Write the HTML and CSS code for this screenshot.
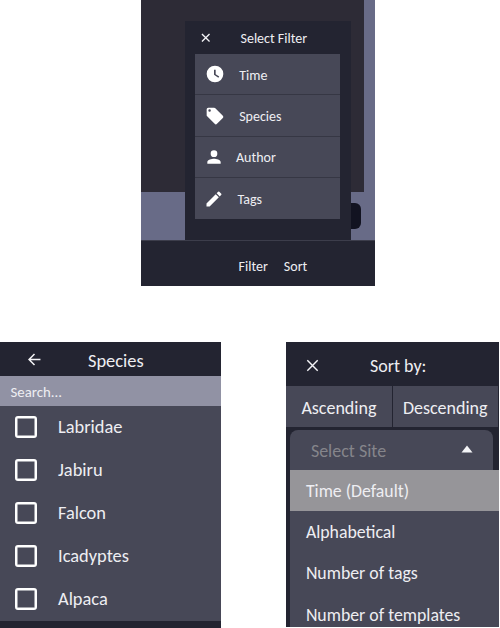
FILE: index.html
```html
<!DOCTYPE html>
<html lang="en">
<head>
<meta charset="utf-8">
<title>Filter and sort</title>
<link rel="stylesheet" href="styles.css">
</head>
<body>
<section class="filter-screen">
  <div class="backdrop">
    <span class="knob"></span>
    <div class="dialog">
      <header class="dialog-head">
        <svg class="close" viewBox="0 0 10 10"><path d="M1 1l8 8M9 1l-8 8"/></svg>
        <h2>Select Filter</h2>
      </header>
      <ul class="filters">
        <li><svg class="icon" viewBox="0 0 24 24"><path fill-rule="evenodd" d="M12 2a10 10 0 1 0 0 20 10 10 0 0 0 0-20zm4 14.400L10.800 13V7h2v5.200l4.300 2.800z"/></svg><span>Time</span></li>
        <li><svg class="icon" viewBox="0 0 24 24"><path fill-rule="evenodd" d="M21.400 11.600l-9-9A2 2 0 0 0 11 2H4a2 2 0 0 0-2 2v7c0 .6.2 1 .6 1.400l9 9a2 2 0 0 0 2.800 0l7-7a2 2 0 0 0 0-2.800zM5.500 7a1.500 1.500 0 1 1 0-3 1.500 1.500 0 0 1 0 3z"/></svg><span>Species</span></li>
        <li><svg class="icon person" viewBox="0 0 24 24"><path d="M12 12a4 4 0 1 0 0-8 4 4 0 0 0 0 8zm0 2c-2.700 0-8 1.300-8 4v2h16v-2c0-2.700-5.300-4-8-4z"/></svg><span class="author">Author</span></li>
        <li><svg class="icon pencil" viewBox="0 0 24 24"><path d="M3 17.250V21h3.750L17.810 9.940l-3.750-3.750zM20.710 7.040a1 1 0 0 0 0-1.410l-2.340-2.340a1 1 0 0 0-1.410 0l-1.830 1.830 3.750 3.750z"/></svg><span class="tags">Tags</span></li>
      </ul>
    </div>
  </div>
  <footer class="tabs"><span>Filter</span><span>Sort</span></footer>
</section>
<main class="panels">
  <section class="species">
    <header class="species-head">
      <svg class="back" viewBox="0 0 12 12"><path d="M11.500 6H1M6 1L1 6l5 5"/></svg>
      <h2>Species</h2>
    </header>
    <div class="search">Search...</div>
    <ul class="checks">
      <li><i class="box"></i><span>Labridae</span></li>
      <li><i class="box"></i><span>Jabiru</span></li>
      <li><i class="box"></i><span>Falcon</span></li>
      <li><i class="box"></i><span>Icadyptes</span></li>
      <li><i class="box"></i><span>Alpaca</span></li>
    </ul>
  </section>
  <section class="sort">
    <header class="sort-head">
      <svg class="close" viewBox="0 0 10 10"><path d="M1 1l8 8M9 1l-8 8"/></svg>
      <h2>Sort by:</h2>
    </header>
    <div class="order"><span>Ascending</span><span>Descending</span></div>
    <div class="select"><span>Select Site</span><svg viewBox="0 0 12 8"><path d="M6 .5L11.500 7.500H.5z"/></svg></div>
    <ul class="options">
      <li class="active">Time (Default)</li>
      <li>Alphabetical</li>
      <li>Number of tags</li>
      <li>Number of templates</li>
    </ul>
  </section>
</main>
</body>
</html>
```
FILE: styles.css
```css
* { box-sizing: border-box; }
body {
  margin: 0;
  width: 500px;
  height: 628px;
  overflow: hidden;
  background: #fff;
  color: #eeeef2;
  font-family: Carlito, Lato, sans-serif;
  font-size: 18px;
}
ul { list-style: none; margin: 0; padding: 0; }
h2 { margin: 0; font-size: inherit; font-weight: 400; }
svg { display: block; flex: none; }
.close, .back { fill: none; stroke: #f4f4f7; stroke-width: 1.4; }

.filter-screen {
  width: 234px;
  height: 286px;
  margin-left: 141px;
  font-size: 14px;
}
.backdrop {
  position: relative;
  height: 240px;
  padding: 21px 24px 0 44px;
  background: linear-gradient(#2d2b36, #2d2b36) 0 0 / 223px 192px no-repeat #686b87;
}
.knob {
  position: absolute;
  left: 200px;
  top: 203px;
  width: 20px;
  height: 26px;
  border-radius: 6px;
  background: #121321;
}
.dialog {
  position: relative;
  height: 219px;
  padding: 0 11px 0 10px;
  background: #232431;
}
.dialog-head { display: flex; align-items: center; height: 33px; padding-left: 5.5px; }
.dialog-head .close { width: 9.5px; height: 9.5px; }
.dialog-head h2 { margin-left: 30.5px; padding-top: 2px; }
.filters li {
  display: flex;
  align-items: center;
  height: 41.4px;
  padding-left: 10px;
  background: #474857;
  border-bottom: 1px solid #363744;
}
.filters li:last-child { height: 41px; border-bottom: 0; }
.filters span { margin-left: 14.2px; padding-top: 2px; }
.filters .author { margin-left: 12.5px; }
.filters .tags { margin-left: 13.5px; }
.icon { width: 20px; height: 20px; fill: #fff; }
.icon.person { margin-left: -1.5px; }
.icon.pencil { margin-left: -1px; }
.tabs {
  display: flex;
  align-items: center;
  gap: 16px;
  height: 46px;
  padding: 6px 0 0 97.6px;
  background: #232431;
  border-top: 1px solid #3c3d4b;
}

.panels { display: flex; gap: 65px; margin-top: 56px; height: 286px; }
.species { width: 221.4px; flex: none; background: #232431; font-size: 18.4px; }
.species-head { display: flex; align-items: center; height: 34px; padding-left: 28px; }
.back { width: 13px; height: 13px; margin-top: 1px; }
.species-head h2 { margin-left: 47px; padding-top: 2px; }
.search {
  height: 30px;
  padding-left: 10.5px;
  background: #9192a4;
  font-size: 14.8px;
  line-height: 32px;
}
.checks { background: #474857; }
.checks li { display: flex; align-items: center; height: 43px; padding: 0 0 2px 15px; }
.box { width: 22px; height: 22px; border: 2px solid #fff; border-radius: 3px; box-shadow: inset 0 0 0 .5px #fff; }
.checks span { margin-left: 21px; }

.sort { width: 212.8px; flex: none; height: 285px; background: #232431; overflow: hidden; }
.sort-head { display: flex; align-items: center; height: 44px; padding-left: 19.5px; }
.sort-head .close { width: 13px; height: 13px; margin-top: 3px; stroke-width: 1.1; }
.sort-head h2 { margin-left: 51px; padding-top: 3px; }
.order { display: flex; gap: 1px; height: 41px; line-height: 44px; }
.order span { width: 105.500px; padding-left: 15px; background: #474857; white-space: nowrap; }
.order span + span { padding-left: 10px; }
.select {
  display: flex;
  align-items: center;
  justify-content: space-between;
  height: 40px;
  margin: 3px 6px 0 4px;
  padding: 1px 20px 0 20.5px;
  border-radius: 8px 8px 0 0;
  background: #474857;
  color: #85858b;
}
.select svg { width: 12px; height: 8px; margin-top: -3px; fill: #f4f4f7; }
.options { margin-left: 4px; font-size: 17.8px; }
.options li { height: 41.2px; padding-left: 15.500px; line-height: 42px; background: #474857; }
.options .active { background: #969599; }
```
